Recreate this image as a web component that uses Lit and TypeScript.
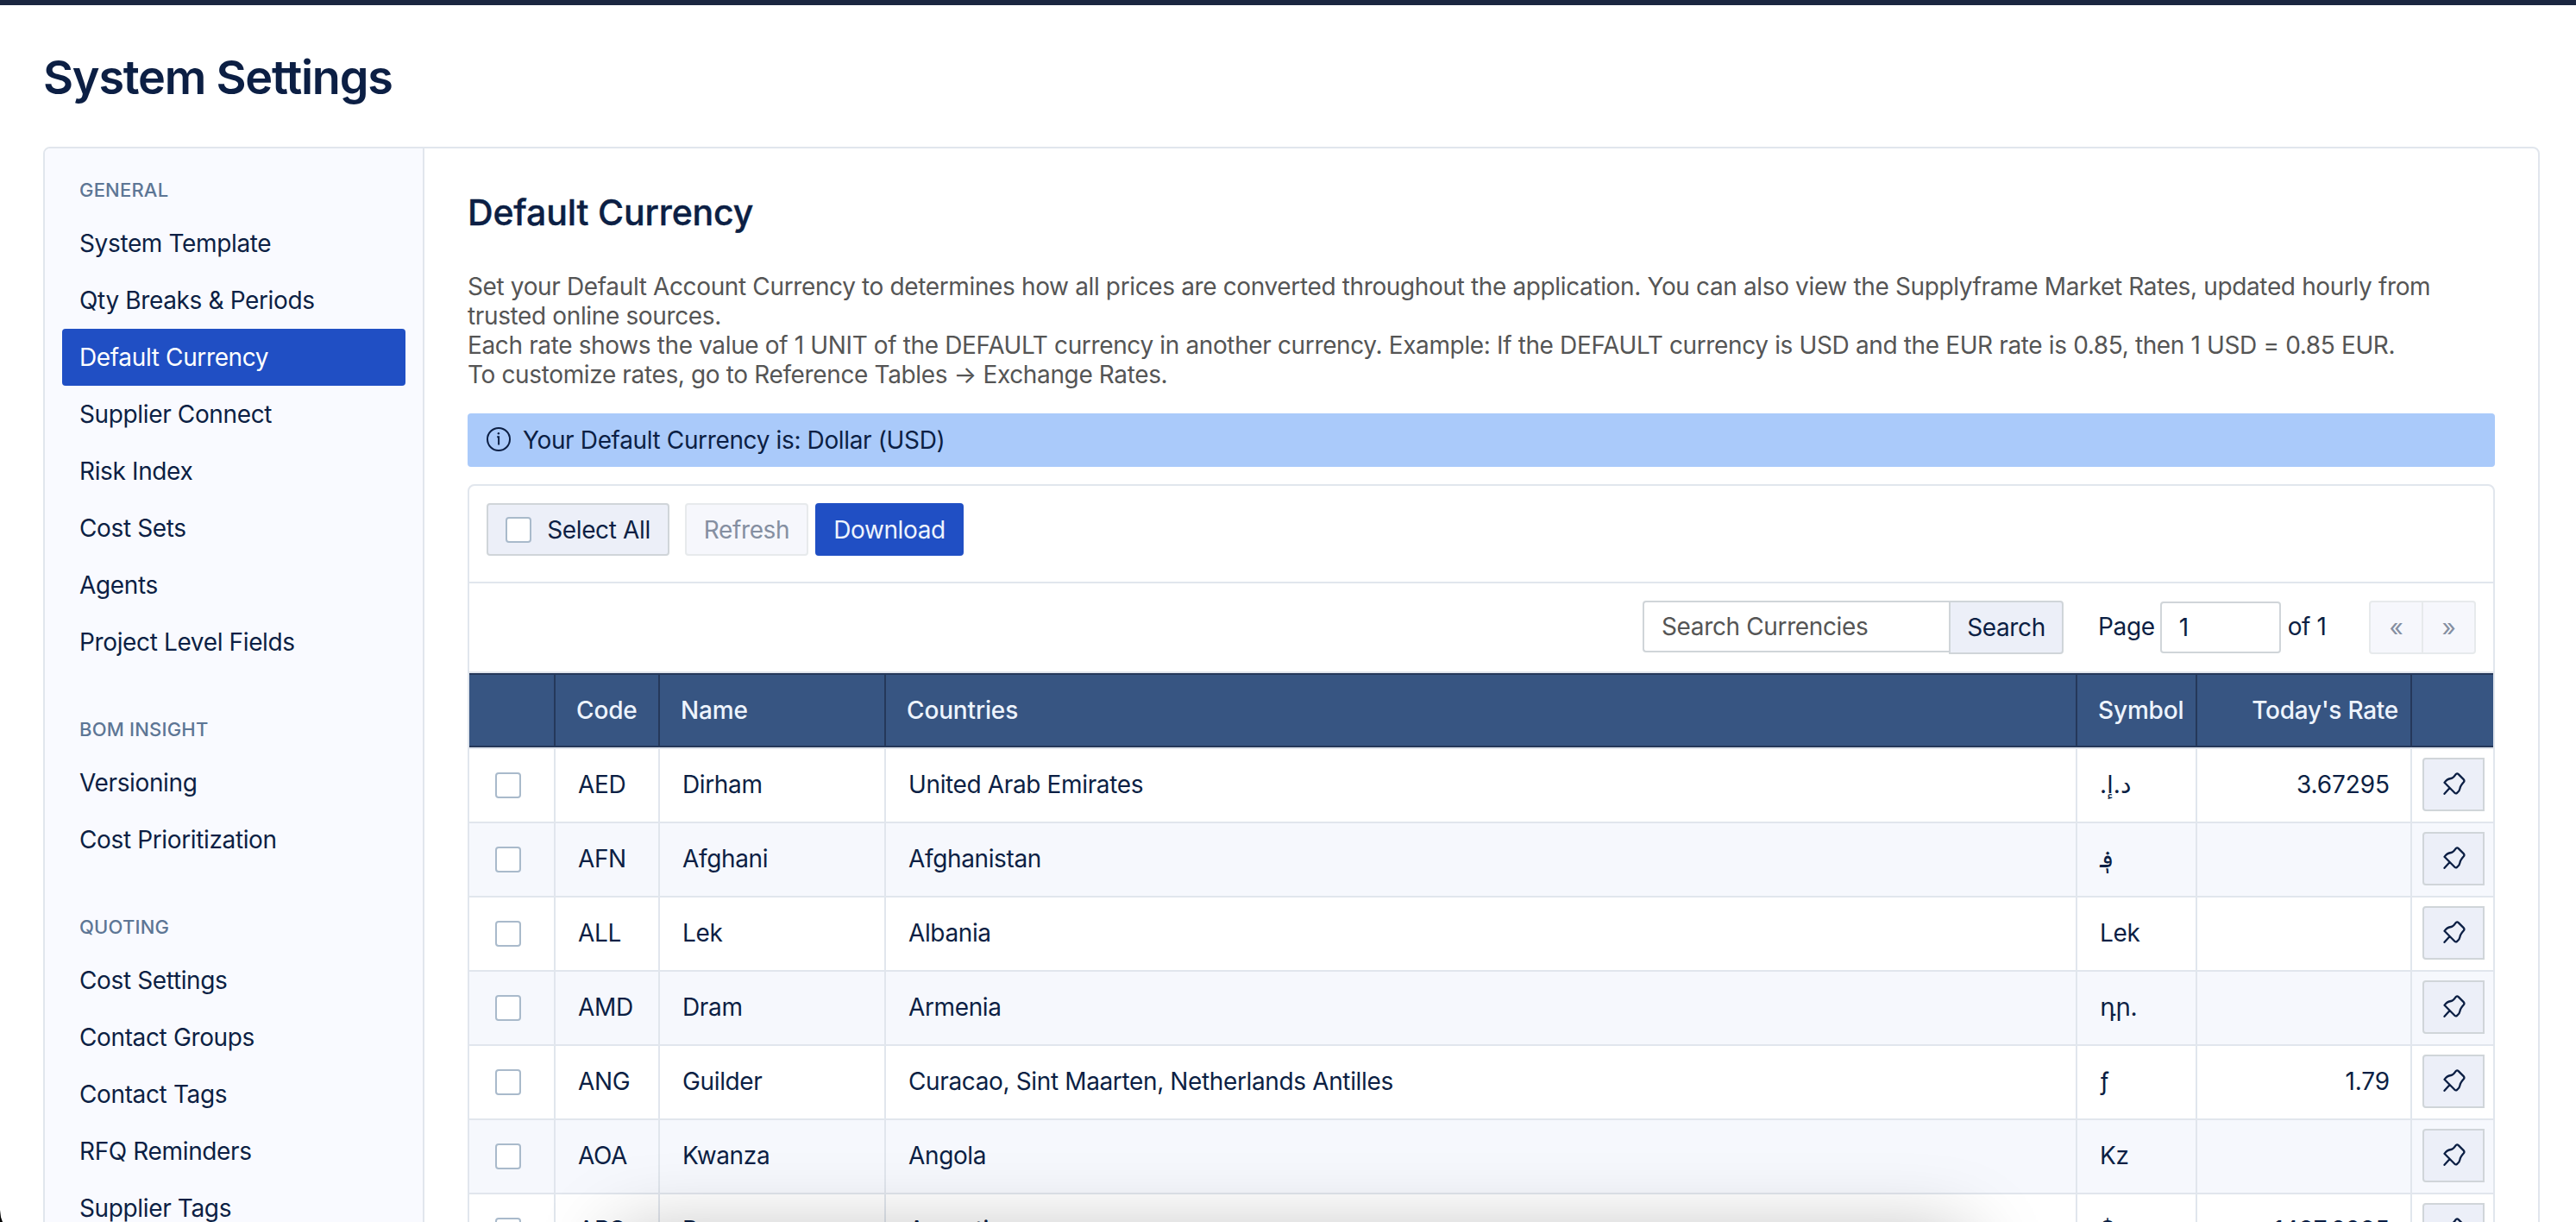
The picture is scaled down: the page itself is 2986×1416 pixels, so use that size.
import {LitElement, html, css, svg, nothing} from 'lit';
import {customElement, property} from 'lit/decorators.js';
import {classMap} from 'lit/directives/class-map.js';

interface NavGroup {
    title: string;
    items: string[];
}

interface Currency {
    code: string;
    name: string;
    countries: string;
    symbol: string;
    rate?: string;
}

const NAV: NavGroup[] = [
    {
        title: 'General',
        items: [
            'System Template',
            'Qty Breaks & Periods',
            'Default Currency',
            'Supplier Connect',
            'Risk Index',
            'Cost Sets',
            'Agents',
            'Project Level Fields',
        ],
    },
    {title: 'BOM Insight', items: ['Versioning', 'Cost Prioritization']},
    {
        title: 'Quoting',
        items: ['Cost Settings', 'Contact Groups', 'Contact Tags', 'RFQ Reminders', 'Supplier Tags'],
    },
];

const CURRENCIES: Currency[] = [
    {code: 'AED', name: 'Dirham', countries: 'United Arab Emirates', symbol: 'د.إ.\u200F', rate: '3.67295'},
    {code: 'AFN', name: 'Afghani', countries: 'Afghanistan', symbol: '؋'},
    {code: 'ALL', name: 'Lek', countries: 'Albania', symbol: 'Lek'},
    {code: 'AMD', name: 'Dram', countries: 'Armenia', symbol: 'դր.'},
    {code: 'ANG', name: 'Guilder', countries: 'Curacao, Sint Maarten, Netherlands Antilles', symbol: 'ƒ', rate: '1.79'},
    {code: 'AOA', name: 'Kwanza', countries: 'Angola', symbol: 'Kz'},
    {code: 'ARS', name: 'Peso', countries: 'Argentina', symbol: '$', rate: '1487.2285'},
];

const infoIcon = svg`
    <svg width="28" height="28" viewBox="0 0 28 28" fill="none" stroke="currentColor" stroke-width="2">
        <circle cx="14" cy="14" r="13"></circle>
        <path d="M12.2 11.3h1.9v9.2"></path>
        <circle cx="13.9" cy="7.2" r="1.2" fill="currentColor" stroke="none"></circle>
    </svg>`;

const pinIcon = svg`
    <svg width="26" height="26" viewBox="0 0 26 26" fill="none" stroke="currentColor" stroke-width="2.3"
        stroke-linecap="round" stroke-linejoin="round">
        <path d="M1.5 24.8 7.2 18.4M1.5 11.8C3.6 8.9 5.6 7.4 9.2 7c2.7-.3 3.9-2.6 5.4-4.7q1.4-1.8 3.1-.2l6 6
            q1.4 1.5.1 3.2C21 14.5 19.8 16.2 19.4 18.8c-.3 2.2-1.7 3.9-3.5 5.2q-1.3.9-2.5-.3Z"></path>
    </svg>`;

@customElement('settings-nav')
export class SettingsNav extends LitElement {
    @property({type: String}) active = '';

    static styles = css`
        :host {
            display: block;
            box-sizing: border-box;
            padding: 20px 20px 0;
            background: #f9faff;
            border-right: 2px solid #e1e6ed;
        }

        .group + .group {
            margin-top: 40px;
        }

        .title {
            padding-left: 20px;
            font-size: 22px;
            line-height: 57px;
            font-weight: 500;
            letter-spacing: .2px;
            text-transform: uppercase;
            color: #5d7695;
        }

        .item {
            padding-left: 20px;
            line-height: 66px;
            border-radius: 4px;
        }

        .item.active {
            color: #fff;
            background: #204fc4;
        }
    `;

    render() {
        return html`${NAV.map(group => html`
            <div class="group">
                <div class="title">${group.title}</div>
                ${group.items.map(item => html`
                    <div class=${classMap({item: true, active: item === this.active})}>${item}</div>`)}
            </div>`)}`;
    }
}

@customElement('currency-table')
export class CurrencyTable extends LitElement {
    @property({attribute: false}) rows: Currency[] = [];

    static styles = css`
        :host {
            display: block;
        }

        .row {
            display: grid;
            grid-template-columns: 98px 121px 262px 1fr 139px 249px 96px;
            height: 86px;
        }

        .row:nth-child(even) {
            background: #fff;
        }

        .row:nth-child(odd) {
            background: #f6f8fd;
        }

        .cell {
            display: flex;
            align-items: center;
            box-sizing: border-box;
            padding: 0 0 2px 26px;
            border-top: 2px solid #e1e6ed;
            border-left: 2px solid #e1e6ed;
            white-space: nowrap;
        }

        .cell:first-child {
            padding: 0 0 0 30px;
            border-left: none;
        }

        .cell.rate {
            justify-content: flex-end;
            padding-right: 24px;
            letter-spacing: -.1px;
        }

        .cell.action {
            padding-left: 12px;
        }

        .row.head {
            color: #eef4fd;
            font-weight: 500;
            letter-spacing: -.15px;
            background: #375582;
        }

        .head .cell {
            padding: 0 0 0 24px;
            border-color: #25385a;
            border-bottom: 2px solid #25385a;
        }

        .head .cell.rate {
            padding-right: 14px;
            letter-spacing: -.25px;
        }

        .check {
            box-sizing: border-box;
            width: 30px;
            height: 30px;
            background: #fff;
            border: 2px solid #a9bacb;
            border-radius: 4px;
        }

        .pin {
            display: flex;
            align-items: center;
            justify-content: center;
            box-sizing: border-box;
            width: 72px;
            height: 62px;
            padding: 0 0 3px 1px;
            background: #eceff8;
            border: 2px solid #d0d5d9;
            border-radius: 4px 0 0 4px;
        }
    `;

    render() {
        return html`
            <div class="row head">
                <div class="cell"></div>
                <div class="cell">Code</div>
                <div class="cell">Name</div>
                <div class="cell">Countries</div>
                <div class="cell">Symbol</div>
                <div class="cell rate">Today's Rate</div>
                <div class="cell"></div>
            </div>
            ${this.rows.map(row => html`
                <div class="row">
                    <div class="cell"><span class="check"></span></div>
                    <div class="cell">${row.code}</div>
                    <div class="cell">${row.name}</div>
                    <div class="cell">${row.countries}</div>
                    <div class="cell">${row.symbol}</div>
                    <div class="cell rate">${row.rate ?? nothing}</div>
                    <div class="cell action"><span class="pin">${pinIcon}</span></div>
                </div>`)}
        `;
    }
}

@customElement('app-root')
export class AppRoot extends LitElement {
    static styles = css`
        :host {
            position: relative;
            display: flex;
            flex-direction: column;
            box-sizing: border-box;
            height: 1416px;
            overflow: hidden;
            border-top: 6px solid #1b2640;
            background: #fff;
            color: #0c1f44;
            font-family: Inter, 'Noto Sans', 'DejaVu Sans', sans-serif;
            font-size: 28px;
            letter-spacing: -.365px;
        }

        .page-title {
            flex: none;
            margin: 0;
            padding: 3px 0 0 50px;
            height: 161px;
            font-size: 54px;
            line-height: 161px;
            font-weight: 600;
            letter-spacing: -1.25px;
        }

        .panel {
            flex: none;
            display: grid;
            grid-template-columns: 440px 1fr;
            box-sizing: border-box;
            height: 1300px;
            margin: 0 42px 0 50px;
            border: 2px solid #e1e6ed;
            border-radius: 8px;
            overflow: hidden;
        }

        .main {
            padding: 50px 50px 0;
        }

        h2 {
            margin: 0;
            font-size: 41px;
            line-height: 49px;
            font-weight: 500;
            letter-spacing: -.15px;
            -webkit-text-stroke: .4px currentColor;
        }

        .intro {
            margin: 44px 0 28px;
            line-height: 34px;
            color: #555;
        }

        .banner {
            display: flex;
            align-items: center;
            gap: 14px;
            height: 62px;
            padding-left: 22px;
            border-radius: 4px;
            background: #aacafa;
        }

        .banner svg {
            margin-bottom: 2px;
        }

        .card {
            margin-top: 20px;
            border: 2px solid #e1e6ed;
            border-radius: 8px 8px 0 0;
        }

        .toolbar {
            display: flex;
            height: 91px;
            padding: 20px 20px 0;
            border-bottom: 2px solid #e1e6ed;
        }

        .filters {
            display: flex;
            justify-content: flex-end;
            height: 82px;
            padding: 20px 20px 0;
            border-bottom: 2px solid #e1e6ed;
        }

        .btn {
            display: flex;
            align-items: center;
            justify-content: center;
            box-sizing: border-box;
            height: 61px;
            background: #eceff8;
            border: 2px solid #d0d5d9;
            border-radius: 4px;
        }

        .btn.disabled {
            color: #858fa1;
            background: #f6f7fc;
            border-color: #e7eaec;
        }

        .btn.primary {
            width: 172px;
            margin-left: 8px;
            color: #eef4fd;
            background: #204fc4;
            border-color: #204fc4;
        }

        .select-all {
            gap: 18px;
            width: 212px;
            margin-right: 18px;
        }

        .refresh {
            width: 143px;
        }

        .check {
            box-sizing: border-box;
            width: 30px;
            height: 30px;
            background: #fff;
            border: 2px solid #a9bacb;
            border-radius: 4px;
        }

        .input {
            box-sizing: border-box;
            height: 60px;
            padding-left: 20px;
            line-height: 57px;
            border: 2px solid #d0d5d9;
            border-radius: 4px;
        }

        .search {
            width: 355px;
            color: #555;
            border-right: none;
            border-radius: 4px 0 0 4px;
        }

        .search-btn {
            width: 133px;
            height: 62px;
            border-radius: 0 4px 4px 0;
        }

        .label {
            line-height: 61px;
        }

        .page {
            width: 140px;
            margin: 1px 8px 0 6px;
        }

        .pager {
            display: flex;
            margin-left: auto;
        }

        .pager .btn {
            width: 63px;
            height: 62px;
            border-radius: 4px 0 0 4px;
        }

        .pager .btn + .btn {
            width: 61px;
            border-left: none;
            border-radius: 0 4px 4px 0;
        }

        .paging {
            display: flex;
            width: 438px;
            margin-left: 40px;
        }

        /* Shadow cast by the window that sits just below the viewport. */
        .window-shadow {
            position: absolute;
            top: 1424px;
            left: 715px;
            width: 1565px;
            height: 200px;
            box-shadow: 0 0 90px rgba(0, 0, 0, .27);
        }

        .window-corner {
            position: absolute;
            left: 0;
            bottom: 0;
            width: 3px;
            height: 14px;
            background: #000;
            clip-path: polygon(0 0, 35% 60%, 100% 100%, 0 100%);
        }
    `;

    render() {
        return html`
            <h1 class="page-title">System Settings</h1>
            <div class="panel">
                <settings-nav active="Default Currency"></settings-nav>
                <div class="main">
                    <h2>Default Currency</h2>
                    <div class="intro">
                        Set your Default Account Currency to determines how all prices are converted throughout the
                        application. You can also view the Supplyframe Market Rates, updated hourly from<br>
                        trusted online sources.<br>
                        Each rate shows the value of 1 UNIT of the DEFAULT currency in another currency. Example: If
                        the DEFAULT currency is USD and the EUR rate is 0.85, then 1 USD = 0.85 EUR.<br>
                        To customize rates, go to Reference Tables → Exchange Rates.
                    </div>
                    <div class="banner">${infoIcon}<span>Your Default Currency is: Dollar (USD)</span></div>
                    <div class="card">
                        <div class="toolbar">
                            <div class="btn select-all"><span class="check"></span>Select All</div>
                            <div class="btn refresh disabled">Refresh</div>
                            <div class="btn primary">Download</div>
                        </div>
                        <div class="filters">
                            <div class="input search">Search Currencies</div>
                            <div class="btn search-btn">Search</div>
                            <div class="paging">
                                <span class="label">Page</span>
                                <div class="input page">1</div>
                                <span class="label">of 1</span>
                                <div class="pager">
                                    <div class="btn disabled">«</div>
                                    <div class="btn disabled">»</div>
                                </div>
                            </div>
                        </div>
                        <currency-table .rows=${CURRENCIES}></currency-table>
                    </div>
                </div>
            </div>
            <div class="window-shadow"></div>
            <div class="window-corner"></div>
        `;
    }
}

declare global {
    interface HTMLElementTagNameMap {
        'settings-nav': SettingsNav;
        'currency-table': CurrencyTable;
        'app-root': AppRoot;
    }
}
